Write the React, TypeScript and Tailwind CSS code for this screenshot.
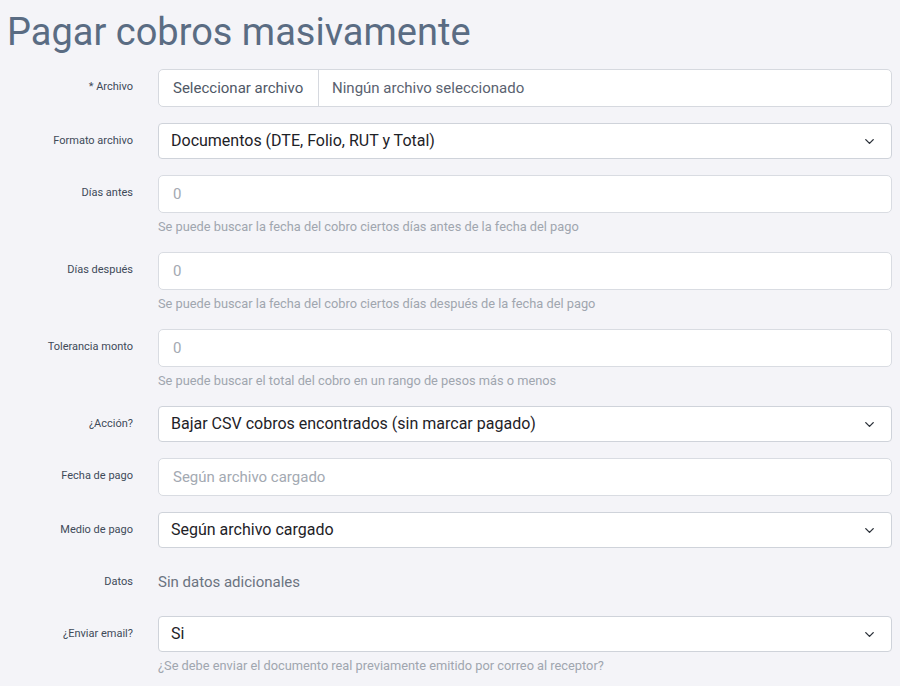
import { ChevronDown } from "lucide-react";

type Row = {
  label: string;
  kind: "file" | "select" | "input" | "text";
  value?: string;
  help?: string;
};

const rows: Row[] = [
  { label: "* Archivo", kind: "file" },
  { label: "Formato archivo", kind: "select", value: "Documentos (DTE, Folio, RUT y Total)" },
  {
    label: "Días antes",
    kind: "input",
    value: "0",
    help: "Se puede buscar la fecha del cobro ciertos días antes de la fecha del pago",
  },
  {
    label: "Días después",
    kind: "input",
    value: "0",
    help: "Se puede buscar la fecha del cobro ciertos días después de la fecha del pago",
  },
  {
    label: "Tolerancia monto",
    kind: "input",
    value: "0",
    help: "Se puede buscar el total del cobro en un rango de pesos más o menos",
  },
  { label: "¿Acción?", kind: "select", value: "Bajar CSV cobros encontrados (sin marcar pagado)" },
  { label: "Fecha de pago", kind: "input", value: "Según archivo cargado" },
  { label: "Medio de pago", kind: "select", value: "Según archivo cargado" },
  { label: "Datos", kind: "text", value: "Sin datos adicionales" },
  {
    label: "¿Enviar email?",
    kind: "select",
    value: "Si",
    help: "¿Se debe enviar el documento real previamente emitido por correo al receptor?",
  },
];

function Field({ row }: { row: Row }) {
  if (row.kind === "file") {
    return (
      <div className="flex h-[38px] items-stretch rounded-[5px] border border-[#d6d9df] bg-white text-[15px]">
        <div className="flex w-[160px] items-center border-r border-[#d6d9df] pl-[14px] text-[#4f5866]">
          Seleccionar archivo
        </div>
        <div className="flex items-center pl-[13px] text-[#5a6270]">Ningún archivo seleccionado</div>
      </div>
    );
  }
  if (row.kind === "select") {
    return (
      <div className="flex h-[36px] items-center justify-between rounded-[4px] border border-[#cfd3da] bg-white pl-[12px] pr-[14px] text-[16px] text-[#1e2227]">
        <span>{row.value}</span>
        <ChevronDown className="h-[15px] w-[15px] text-[#2c323a]" strokeWidth={2.2} />
      </div>
    );
  }
  if (row.kind === "text") {
    return <div className="flex h-[36px] items-center text-[15px] text-[#6b7380]">{row.value}</div>;
  }
  return (
    <div className="flex h-[38px] items-center rounded-[5px] border border-[#d9dce2] bg-white pl-[14px] text-[15px] text-[#a3a9b2]">
      {row.value}
    </div>
  );
}

export default function App() {
  return (
    <main
      className="min-h-screen bg-[#f4f4f8] pl-[7px] pr-[8px]"
      style={{ fontFamily: "Roboto, 'Noto Sans', sans-serif" }}
    >
      <h1 className="pt-[8px] pb-[12px] text-[38px] leading-[49px] text-[#5a6c83]">Pagar cobros masivamente</h1>

      <div className="flex flex-col">
        {rows.map((row) => (
          <div key={row.label} className="mb-[16px] grid grid-cols-[126px_1fr] gap-x-[25px]">
            <div className="flex h-[36px] items-center justify-end text-[11px] text-[#404a58]">{row.label}</div>
            <div>
              <Field row={row} />
              {row.help && (
                <p className="mt-[4px] text-[12.8px] leading-[19px] text-[#a0a6af]">{row.help}</p>
              )}
            </div>
          </div>
        ))}
      </div>
    </main>
  );
}
